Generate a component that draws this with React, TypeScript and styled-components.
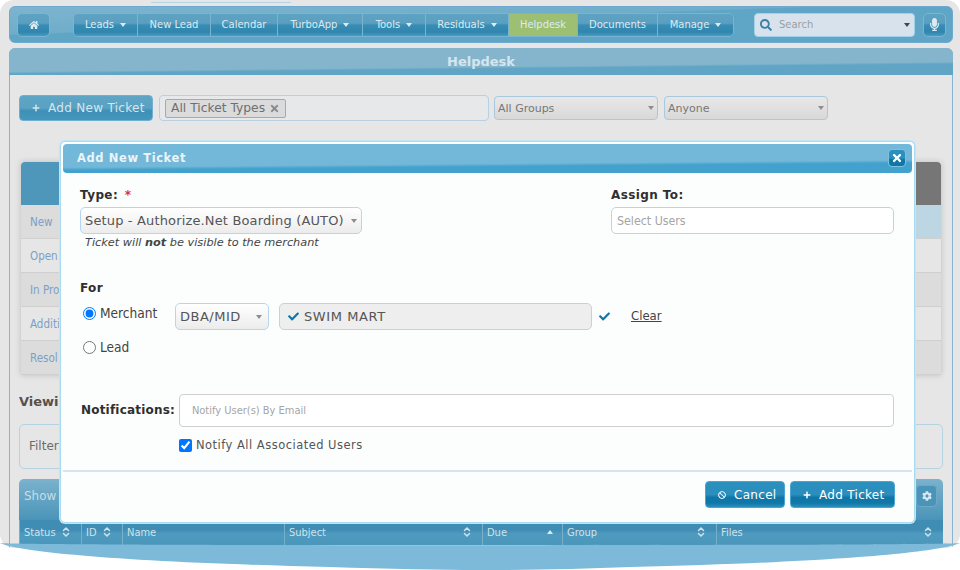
import React from 'react';
import styled, { createGlobalStyle } from 'styled-components';
import { ChevronsUpDown } from 'lucide-react';
import { FaBan, FaCheck, FaCog, FaHome, FaMicrophone, FaPlus, FaSearch, FaTimes } from 'react-icons/fa';

const GlobalStyle = createGlobalStyle`
  html, body {
    margin: 0;
    padding: 0;
    background: #fff;
    font-family: "DejaVu Sans", Verdana, sans-serif;
  }
  * {
    box-sizing: border-box;
  }
`;

const Page = styled.div`
  position: relative;
  width: 960px;
  height: 570px;
  overflow: hidden;
  background: #fff;
`;

const Frame = styled.div`
  height: 548px;
  padding: 6px 7px 0 9px;
  background: #e6e6e6;
  border-radius: 14px;
  overflow: hidden;
`;

const NavBar = styled.div`
  display: flex;
  align-items: center;
  height: 37px;
  padding: 0 6px 0 7px;
  background: linear-gradient(178deg, #7db4cf 0, #6fadca 40%, #5fa5c5 42%);
  border: 1px solid #6fa9cf;
  border-radius: 6px;
  > * {
    flex: none;
  }
`;

const barFill = `linear-gradient(#5fa3c3 0, #5a9fc0 42%, #3a8db5 50%, #2f86ae 82%, #4b9bbf 100%)`;

const Caret = styled.span<{ $color?: string; $size?: number }>`
  flex: none;
  width: 0;
  height: 0;
  border-left: ${p => p.$size || 3}px solid transparent;
  border-right: ${p => p.$size || 3}px solid transparent;
  border-top: ${p => (p.$size || 3) + 1}px solid ${p => p.$color || '#8d8d8d'};
`;

const HomeButton = styled.div`
  display: flex;
  align-items: center;
  justify-content: center;
  width: 33px;
  height: 24px;
  margin-right: 23px;
  color: #dcebf2;
  font-size: 10px;
  background: ${barFill};
  border: 1px solid #79b5d2;
  border-radius: 5px;
`;

const NavGroup = styled.div`
  display: flex;
  height: 24px;
  border: 1px solid #79b5d2;
  border-radius: 5px;
  overflow: hidden;
`;

const NavItem = styled.div<{ $width: number; $active?: boolean }>`
  display: flex;
  align-items: center;
  justify-content: center;
  gap: 6px;
  width: ${p => p.$width}px;
  color: #dcebf2;
  font-family: "DejaVu Sans Condensed", "DejaVu Sans", sans-serif;
  font-size: 11.1px;
  background: ${p => (p.$active ? '#9dbf72' : barFill)};
  border-right: 1px solid #79b5d2;
  &:last-child {
    border-right: 0;
  }
`;

const Search = styled.div`
  display: flex;
  align-items: center;
  gap: 7px;
  width: 161px;
  height: 24px;
  margin-left: 20px;
  padding: 0 4px 0 5px;
  color: #3b7fa8;
  font-family: "DejaVu Sans Condensed", "DejaVu Sans", sans-serif;
  font-size: 11.1px;
  background: #d8e2ec;
  border: 1px solid #a4d0e8;
  border-radius: 4px;
  span:first-of-type {
    flex: 1;
    color: #9a9fa5;
  }
`;

const MicButton = styled(HomeButton)`
  width: 23px;
  margin: 0 0 0 8px;
  font-size: 13px;
`;

const Panel = styled.div`
  margin-top: 5px;
  height: 520px;
  border: 1px solid #84b5d6;
  border-radius: 6px 6px 0 0;
`;

const PanelHeader = styled.div`
  display: flex;
  align-items: center;
  justify-content: center;
  height: 27px;
  margin: -1px -1px 0;
  color: #d5e6ee;
  font-size: 13px;
  font-weight: bold;
  background: linear-gradient(179.4deg, #84b5cd 64%, #60a5c5 70%);
  border-radius: 6px 6px 0 0;
`;

const PanelBody = styled.div`
  padding: 20px 9px 0;
`;

const Toolbar = styled.div`
  display: flex;
  align-items: center;
  height: 26px;
`;

const ActionButton = styled.div<{ $width: number }>`
  display: flex;
  align-items: center;
  gap: 8px;
  width: ${p => p.$width}px;
  height: 27px;
  padding-left: 12px;
  color: #fff;
  font-size: 12px;
  letter-spacing: 0.3px;
  background: linear-gradient(#2b90bf 0, #2b8ebd 50%, #0e77a8 62%, #1077a8 84%, #2a8fbd 100%);
  border: 1px solid #4aa5d0;
  border-radius: 4px;
  svg {
    flex: none;
    font-size: 8px;
  }
`;

const ToolbarButton = styled(ActionButton)`
  height: 26px;
  color: #d5e6ee;
  background: linear-gradient(#5fa5c5 0, #5aa1c2 50%, #3e90b7 62%, #4596bc 100%);
  border-color: #6fb0d0;
`;

const TagBox = styled.div`
  display: flex;
  align-items: center;
  width: 330px;
  height: 26px;
  margin: 0 5px 0 6px;
  padding-left: 5px;
  background: #e6e8ea;
  border: 1px solid #b9cfe2;
  border-radius: 4px;
`;

const Tag = styled.div`
  display: flex;
  align-items: center;
  gap: 4px;
  height: 19px;
  padding: 0 5px;
  color: #6f6f6f;
  font-size: 12.3px;
  background: #dbdbdb;
  border: 1px solid #a9a9a9;
  border-radius: 2px;
  svg {
    font-size: 11px;
    color: #8b8b8b;
  }
`;

const DimSelect = styled.div<{ $width: number }>`
  display: flex;
  align-items: center;
  justify-content: space-between;
  width: ${p => p.$width}px;
  height: 24px;
  margin-right: 6px;
  padding: 0 3px 0 3px;
  color: #777;
  font-size: 11px;
  background: linear-gradient(#e8e8e8, #d8d8d8);
  border: 1px solid #a9c8de;
  border-radius: 4px;
`;

const Queue = styled.div`
  width: 920px;
  margin: 41px 0 0 2px;
  box-shadow: 0 0 6px rgba(0, 0, 0, 0.18);
`;

const QueueHead = styled.div`
  height: 43px;
  border-radius: 4px 4px 0 0;
  background: linear-gradient(90deg, #4f97ba 0, #4f97ba 60%, #767676 60%);
`;

const QueueRow = styled.div<{ $shade: string }>`
  display: flex;
  align-items: center;
  height: 34px;
  padding-left: 9px;
  color: #7b9fc6;
  font-family: "DejaVu Sans Condensed", "DejaVu Sans", sans-serif;
  font-size: 11.5px;
  background: ${p => p.$shade};
  border-bottom: 1px solid #cfcfcf;
`;

const Viewing = styled.div`
  margin: 18.5px 0 0;
  color: #55504c;
  font-size: 13px;
  font-weight: bold;
`;

const FilterBox = styled.div`
  display: flex;
  align-items: center;
  height: 45px;
  margin-top: 15px;
  padding-left: 9px;
  color: #6b6b6b;
  font-size: 12px;
  border: 1px solid #b6d3e3;
  border-radius: 5px;
`;

const Listing = styled.div`
  height: 66px;
  margin-top: 10px;
`;

const ListingTop = styled.div`
  display: flex;
  align-items: center;
  justify-content: space-between;
  height: 41px;
  padding: 0 6px 6px 5px;
  color: #c6dde8;
  font-size: 12px;
  background: linear-gradient(#7cb2cc, #4a94b9);
  border-radius: 5px 5px 0 0;
`;

const GearButton = styled.div`
  display: flex;
  align-items: center;
  justify-content: center;
  width: 21px;
  height: 22px;
  color: #d7e7ef;
  font-size: 10px;
  background: #4a94b9;
  border: 1px solid #6fa9c6;
  border-radius: 4px;
`;

const ColumnRow = styled.div`
  display: grid;
  grid-template-columns: 62px 41px 162px 198px 80px 154px 1fr;
  height: 25px;
  background: linear-gradient(#3f8db5 0, #3f8db5 40%, #4f9abf 55%, #4b96bb 100%);
`;

const Column = styled.div`
  display: flex;
  align-items: center;
  justify-content: space-between;
  padding: 0 9px 0 4px;
  color: #d0e2ea;
  font-family: "DejaVu Sans Condensed", "DejaVu Sans", sans-serif;
  font-size: 11px;
  border-left: 1px solid #78b0cb;
`;

const Swoosh = styled.svg`
  position: absolute;
  left: 0;
  top: 540px;
`;

const TopTab = styled.div`
  position: absolute;
  left: 151px;
  top: 2px;
  width: 140px;
  height: 1px;
  background: #b4d4e4;
`;

const Modal = styled.div`
  position: absolute;
  left: 60px;
  top: 141px;
  display: flex;
  flex-direction: column;
  width: 855px;
  height: 382px;
  padding: 2px;
  background: #fcfefe;
  border: 1px solid #a9dcf0;
  border-radius: 5px;
  box-shadow: 0 0 0 1px #c3e4f2;
`;

const ModalHeader = styled.div`
  display: flex;
  align-items: center;
  justify-content: space-between;
  flex: none;
  height: 29px;
  padding: 0 6px 2px 14px;
  color: #e9f5fa;
  font-size: 11.5px;
  font-weight: bold;
  letter-spacing: 0.6px;
  background: linear-gradient(179.5deg, #73b8d8 64%, #43a2cd 72%);
  border-radius: 4px;
`;

const CloseButton = styled.div`
  display: flex;
  align-items: center;
  justify-content: center;
  width: 18px;
  height: 18px;
  color: #fff;
  font-size: 12px;
  background: linear-gradient(#2b90bf 50%, #0e77a8 60%);
  border: 1px solid #7cc2e0;
  border-radius: 4px;
`;

const ModalBody = styled.div`
  flex: 1;
  padding: 14px 18px 0 17px;
`;

const TopFields = styled.div`
  display: flex;
  justify-content: space-between;
  height: 77px;
`;

const FieldColumn = styled.div<{ $width: number }>`
  width: ${p => p.$width}px;
`;

const Label = styled.div`
  height: 20px;
  color: #2f2f2f;
  font-size: 12px;
  font-weight: bold;
  letter-spacing: 0.4px;
  line-height: 16px;
  b {
    margin-left: 2px;
    color: #e0303a;
  }
`;

const SelectBox = styled.div<{ $width: number }>`
  display: flex;
  align-items: center;
  justify-content: space-between;
  width: ${p => p.$width}px;
  height: 27px;
  padding: 0 4px;
  color: #555;
  font-size: 13px;
  letter-spacing: 0.15px;
  white-space: nowrap;
  background: linear-gradient(#ffffff, #ececec);
  border: 1px solid #b5d6ee;
  border-radius: 5px;
`;

const MidSelect = styled(SelectBox)`
  padding-right: 6px;
  letter-spacing: 0.5px;
`;

const Hint = styled.div`
  margin: 2px 0 0 5px;
  color: #444;
  font-size: 11.3px;
  font-style: italic;
`;

const TextInput = styled.input<{ $line: string }>`
  display: block;
  width: 100%;
  padding: 0 5px;
  font-family: "DejaVu Sans Condensed", "DejaVu Sans", sans-serif;
  font-size: 12.3px;
  background: #fff;
  border: 1px solid ${p => p.$line};
  border-radius: 5px;
  outline: none;
  &::placeholder {
    color: #a5a5a5;
  }
`;

const AssignInput = styled(TextInput)`
  height: 27px;
`;

const ForLabel = styled(Label)`
  margin-top: 16px;
`;

const ForRow = styled.div`
  display: flex;
  margin-top: 3px;
`;

const RadioColumn = styled.div`
  display: flex;
  flex-direction: column;
  gap: 14px;
  width: 95px;
  padding-left: 3px;
`;

const RadioLabel = styled.label`
  display: flex;
  align-items: center;
  gap: 4px;
  height: 20px;
  color: #444;
  font-family: "DejaVu Sans Condensed", "DejaVu Sans", sans-serif;
  font-size: 13.6px;
  input {
    width: 13px;
    height: 13px;
    margin: 0;
  }
`;

const ChosenBox = styled.div`
  display: flex;
  align-items: center;
  gap: 5px;
  width: 313px;
  height: 27px;
  margin-left: 10px;
  padding: 0 8px;
  color: #555;
  font-size: 13px;
  letter-spacing: 0.6px;
  background: #eeeeee;
  border: 1px solid #b5d6ee;
  border-radius: 5px;
  svg {
    color: #0e77a8;
    font-size: 11px;
  }
`;

const ChosenTick = styled.div`
  display: flex;
  align-items: center;
  height: 27px;
  margin-left: 7px;
  color: #0e77a8;
  font-size: 11px;
`;

const ClearLink = styled.a`
  display: flex;
  align-items: center;
  height: 24px;
  margin-left: 21px;
  color: #444;
  font-family: "DejaVu Sans Condensed", "DejaVu Sans", sans-serif;
  font-size: 13px;
  text-decoration: underline;
`;

const NotifyRow = styled.div`
  display: flex;
  align-items: center;
  margin-top: 37px;
`;

const NotifyLabel = styled(Label)`
  width: 98px;
  height: auto;
  margin: -1px 0 0 1px;
  white-space: nowrap;
  letter-spacing: 0.2px;
`;

const NotifyInput = styled(TextInput)`
  width: 716px;
  height: 33px;
  padding-left: 12px;
  font-size: 11px;
  border-radius: 4px;
`;

const CheckLabel = styled.label`
  display: flex;
  align-items: center;
  gap: 4px;
  margin: 11px 0 0 99px;
  color: #555;
  font-size: 11.5px;
  letter-spacing: 0.48px;
  input {
    width: 13px;
    height: 13px;
    margin: 0;
  }
`;

const ModalFooter = styled.div`
  display: flex;
  justify-content: flex-end;
  gap: 5px;
  flex: none;
  height: 50px;
  padding: 9px 17px 0 0;
  border-top: 2px solid #d5e5f0;
`;

const navItems = [
  { label: 'Leads', width: 64, caret: true },
  { label: 'New Lead', width: 73 },
  { label: 'Calendar', width: 67 },
  { label: 'TurboApp', width: 85, caret: true },
  { label: 'Tools', width: 63, caret: true },
  { label: 'Residuals', width: 83, caret: true },
  { label: 'Helpdesk', width: 69, active: true },
  { label: 'Documents', width: 80 },
  { label: 'Manage', width: 75, caret: true },
];

const queueRows = [
  { label: 'New', shade: 'linear-gradient(90deg, #dcdcdc 0, #dcdcdc 50%, #bcd6e4 50%)' },
  { label: 'Open', shade: '#e6e6e6' },
  { label: 'In Pro', shade: '#dcdcdc' },
  { label: 'Additi', shade: '#e6e6e6' },
  { label: 'Resol', shade: '#dcdcdc' },
];

const columns = ['Status', 'ID', 'Name', 'Subject', 'Due', 'Group', 'Files'];

const App: React.FC = () => {
  return (
    <Page>
      <GlobalStyle />
      <Frame>
        <NavBar>
          <HomeButton><FaHome /></HomeButton>
          <NavGroup>
            {navItems.map(item => (
              <NavItem key={item.label} $width={item.width} $active={item.active}>
                {item.label}
                {item.caret && <Caret $color="#dcebf2" />}
              </NavItem>
            ))}
          </NavGroup>
          <Search>
            <FaSearch size={12} />
            <span>Search</span>
            <Caret $color="#444" />
          </Search>
          <MicButton><FaMicrophone /></MicButton>
        </NavBar>
        <Panel>
          <PanelHeader>Helpdesk</PanelHeader>
          <PanelBody>
            <Toolbar>
              <ToolbarButton $width={134}><FaPlus />Add New Ticket</ToolbarButton>
              <TagBox>
                <Tag>All Ticket Types<FaTimes /></Tag>
              </TagBox>
              <DimSelect $width={164}>All Groups<Caret /></DimSelect>
              <DimSelect $width={164}>Anyone<Caret /></DimSelect>
            </Toolbar>
            <Queue>
              <QueueHead />
              {queueRows.map(row => (
                <QueueRow key={row.label} $shade={row.shade}>{row.label}</QueueRow>
              ))}
            </Queue>
            <Viewing>Viewing</Viewing>
            <FilterBox>Filter</FilterBox>
            <Listing>
              <ListingTop>
                <span>Show</span>
                <GearButton><FaCog /></GearButton>
              </ListingTop>
              <ColumnRow>
                {columns.map(name => (
                  <Column key={name}>
                    {name}
                    {name === 'Due' ? <Caret $color="#dcebf2" style={{ transform: 'rotate(180deg)' }} /> : name !== 'Name' && <ChevronsUpDown size={12} strokeWidth={3} />}
                  </Column>
                ))}
              </ColumnRow>
            </Listing>
          </PanelBody>
        </Panel>
      </Frame>
      <TopTab />
      <Swoosh width="960" height="30" viewBox="0 0 960 30">
        <path d="M0 3 C20 12 120 22 330 27 Q420 30 480 30 Q560 30 630 27 C840 22 940 12 960 3 C950 6 20 6 0 3 Z" fill="#7db9d9" />
      </Swoosh>
      <Modal>
        <ModalHeader>
          Add New Ticket
          <CloseButton><FaTimes /></CloseButton>
        </ModalHeader>
        <ModalBody>
          <TopFields>
            <FieldColumn $width={282}>
              <Label>Type: <b>*</b></Label>
              <SelectBox $width={282}>Setup - Authorize.Net Boarding (AUTO)<Caret /></SelectBox>
              <Hint>Ticket will <strong>not</strong> be visible to the merchant</Hint>
            </FieldColumn>
            <FieldColumn $width={283}>
              <Label>Assign To:</Label>
              <AssignInput $line="#b5d6ee" placeholder="Select Users" readOnly />
            </FieldColumn>
          </TopFields>
          <ForLabel>For</ForLabel>
          <ForRow>
            <RadioColumn>
              <RadioLabel><input type="radio" name="for" defaultChecked />Merchant</RadioLabel>
              <RadioLabel><input type="radio" name="for" />Lead</RadioLabel>
            </RadioColumn>
            <MidSelect $width={94}>DBA/MID<Caret /></MidSelect>
            <ChosenBox><FaCheck />SWIM MART</ChosenBox>
            <ChosenTick><FaCheck /></ChosenTick>
            <ClearLink>Clear</ClearLink>
          </ForRow>
          <NotifyRow>
            <NotifyLabel>Notifications:</NotifyLabel>
            <NotifyInput $line="#cfcfcf" placeholder="Notify User(s) By Email" readOnly />
          </NotifyRow>
          <CheckLabel><input type="checkbox" defaultChecked />Notify All Associated Users</CheckLabel>
        </ModalBody>
        <ModalFooter>
          <ActionButton $width={80}><FaBan />Cancel</ActionButton>
          <ActionButton $width={105}><FaPlus />Add Ticket</ActionButton>
        </ModalFooter>
      </Modal>
    </Page>
  );
};

export default App;
